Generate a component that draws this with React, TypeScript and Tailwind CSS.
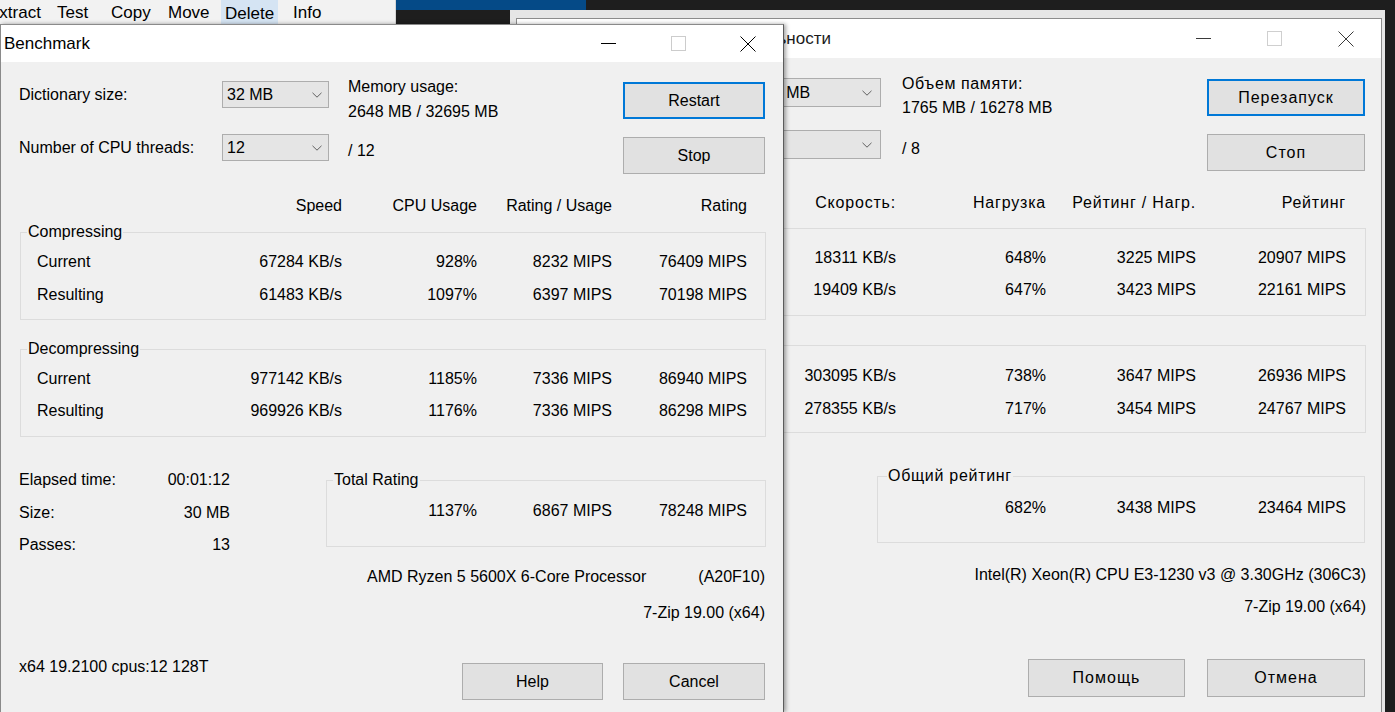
import React from "react";

const Chevron = () => (
  <svg width="10" height="6" viewBox="0 0 10 6" fill="none" aria-hidden>
    <path d="M0.5 0.8L5 5.2L9.5 0.8" stroke="#606060" strokeWidth="1" />
  </svg>
);

function Combo({ text, className }: { text: string; className: string }) {
  return (
    <div className={"flex items-center justify-between border border-[#adadad] bg-[#e5e5e5] " + className}>
      <span>{text}</span>
      <Chevron />
    </div>
  );
}

function Btn({ children, className }: { children: React.ReactNode; className: string }) {
  return <div className={"flex items-center justify-center bg-[#e1e1e1] " + className}>{children}</div>;
}

function Controls({ w, dark, light }: { w: string; dark: string; light: string }) {
  return (
    <div className="flex h-full">
      <div className={"flex h-full items-center justify-center " + w}>
        <svg width="15" height="1" aria-hidden>
          <rect width="15" height="1" fill={dark} />
        </svg>
      </div>
      <div className={"flex h-full items-center justify-center " + w}>
        <svg width="15" height="15" aria-hidden>
          <rect x="0.5" y="0.5" width="14" height="14" fill="none" stroke={light} />
        </svg>
      </div>
      <div className={"flex h-full items-center justify-center " + w}>
        <svg width="16" height="16" aria-hidden>
          <path d="M0.5 0.5L15.5 15.5M15.5 0.5L0.5 15.5" stroke={dark} strokeWidth="1" />
        </svg>
      </div>
    </div>
  );
}

const leftComp = [
  ["Current", "67284 KB/s", "928%", "8232 MIPS", "76409 MIPS"],
  ["Resulting", "61483 KB/s", "1097%", "6397 MIPS", "70198 MIPS"],
];
const leftDecomp = [
  ["Current", "977142 KB/s", "1185%", "7336 MIPS", "86940 MIPS"],
  ["Resulting", "969926 KB/s", "1176%", "7336 MIPS", "86298 MIPS"],
];
const rightComp = [
  ["18311 KB/s", "648%", "3225 MIPS", "20907 MIPS"],
  ["19409 KB/s", "647%", "3423 MIPS", "22161 MIPS"],
];
const rightDecomp = [
  ["303095 KB/s", "738%", "3647 MIPS", "26936 MIPS"],
  ["278355 KB/s", "717%", "3454 MIPS", "24767 MIPS"],
];

function RightWindow() {
  return (
    <div className="absolute left-[510px] top-[10px] z-0 h-[702px] w-[875px] bg-[#e6e6e6] pl-[6px] pr-[3px] pt-[8px]">
      <div className="flex h-full flex-col border-l border-r border-t border-[#8c8c8c] bg-[#f0f0f0]">
        {/* title bar */}
        <div className="flex h-[39px] items-center bg-white">
          <div className="w-[314px] text-right text-[17px] text-[#1a1a1a]">Тестирование производительности</div>
          <div className="flex-1" />
          <Controls w="w-[71px]" dark="#3a3a3a" light="#cfcfcf" />
        </div>
        {/* body */}
        <div className="flex flex-1 flex-col">
          <div className="flex h-[113px] pl-[18px]">
            <div className="flex flex-col gap-[23px] pt-[20px]">
              <div className="flex h-[29px] items-center">
                <span className="w-[224px]" />
                <Combo text="16 MB" className="h-[29px] w-[122px] pl-[4px] pr-[8px]" />
              </div>
              <div className="flex h-[29px] items-center">
                <span className="w-[224px]" />
                <Combo text="" className="h-[29px] w-[122px] pl-[4px] pr-[8px]" />
              </div>
            </div>
            <div className="ml-[21px] w-[305px] pt-[14px] leading-[24px]">
              <div className="tracking-[0.6px]">Объем памяти:</div>
              <div>1765 MB / 16278 MB</div>
              <div className="mt-[17px]">/ 8</div>
            </div>
            <div className="flex flex-col gap-[18px] pt-[21px]">
              <Btn className="h-[37px] w-[158px] border-2 border-[#0078d7] tracking-[1px]">Перезапуск</Btn>
              <Btn className="h-[37px] w-[158px] border border-[#adadad] tracking-[1px]">Стоп</Btn>
            </div>
          </div>

          <div className="ml-[19px] mt-[22px] grid grid-cols-[210px_150px_150px_150px_150px] tracking-[0.8px]">
            <span />
            <span className="text-right">Скорость:</span>
            <span className="text-right">Нагрузка</span>
            <span className="text-right">Рейтинг / Нагр.</span>
            <span className="text-right">Рейтинг</span>
          </div>

          <fieldset className="ml-[18px] mt-[5px] w-[831px] border border-[#dcdcdc] pb-[9px] pt-[4px]">
            <legend className="ml-[9px] px-[1px] leading-[20px]">Сжатие</legend>
            {rightComp.map((r, i) => (
              <div key={i} className="grid h-[32px] grid-cols-[210px_150px_150px_150px_150px] items-center">
                <span />
                <span className="text-right">{r[0]}</span>
                <span className="text-right">{r[1]}</span>
                <span className="text-right">{r[2]}</span>
                <span className="text-right">{r[3]}</span>
              </div>
            ))}
          </fieldset>

          <fieldset className="ml-[18px] mt-[19px] w-[831px] border border-[#dcdcdc] pb-[7px] pt-[4px]">
            <legend className="ml-[9px] px-[1px] leading-[20px]">Распаковка</legend>
            {rightDecomp.map((r, i) => (
              <div key={i} className="grid h-[33px] grid-cols-[210px_150px_150px_150px_150px] items-center">
                <span />
                <span className="text-right">{r[0]}</span>
                <span className="text-right">{r[1]}</span>
                <span className="text-right">{r[2]}</span>
                <span className="text-right">{r[3]}</span>
              </div>
            ))}
          </fieldset>

          <div className="mt-[33px] flex h-[77px] items-start pl-[18px]">
            <div className="w-[211px]" />
            <fieldset className="ml-[131px] w-[488px] border border-[#dcdcdc] pb-[18px] pt-[6px]">
              <legend className="ml-[9px] px-[1px] leading-[20px] tracking-[0.7px]">Общий рейтинг</legend>
              <div className="grid h-[32px] grid-cols-[18px_150px_150px_150px] items-center">
                <span />
                <span className="text-right">682%</span>
                <span className="text-right">3438 MIPS</span>
                <span className="text-right">23464 MIPS</span>
              </div>
            </fieldset>
          </div>

          <div className="ml-[18px] mt-[22px] w-[831px] text-right">Intel(R) Xeon(R) CPU E3-1230 v3 @ 3.30GHz (306C3)</div>
          <div className="ml-[18px] mt-[12px] w-[831px] text-right">7-Zip 19.00 (x64)</div>

          <div className="ml-[18px] mt-[42px] flex w-[830px] justify-end gap-[22px]">
            <Btn className="h-[38px] w-[157px] border border-[#adadad] tracking-[1px]">Помощь</Btn>
            <Btn className="h-[38px] w-[158px] border border-[#adadad] tracking-[1px]">Отмена</Btn>
          </div>
        </div>
      </div>
    </div>
  );
}

function LeftWindow() {
  return (
    <div className="absolute left-0 top-[24px] z-10 flex h-[688px] w-[784px] flex-col border-l border-r border-t border-[#8a8a8a] border-r-[#5c5c5c] shadow-[2px_0_4px_rgba(0,0,0,0.35)]">
      <div className="flex h-[37px] items-center bg-white">
        <span className="pl-[3px] text-[17px]">Benchmark</span>
        <div className="flex-1" />
        <Controls w="w-[70px]" dark="#000000" light="#cccccc" />
      </div>
      <div className="flex flex-1 flex-col bg-[#f0f0f0]">
        <div className="flex h-[113px] pl-[18px]">
          <div className="flex flex-col gap-[26px] pt-[19px]">
            <div className="flex h-[27px] items-center">
              <span className="w-[203px]">Dictionary size:</span>
              <Combo text="32 MB" className="h-[27px] w-[107px] pl-[4px] pr-[6px]" />
            </div>
            <div className="flex h-[27px] items-center">
              <span className="w-[203px]">Number of CPU threads:</span>
              <Combo text="12" className="h-[27px] w-[107px] pl-[4px] pr-[6px]" />
            </div>
          </div>
          <div className="ml-[19px] w-[275px] pt-[12px] leading-[25px]">
            <div>Memory usage:</div>
            <div>2648 MB / 32695 MB</div>
            <div className="mt-[14px]">/ 12</div>
          </div>
          <div className="flex flex-col gap-[18px] pt-[20px]">
            <Btn className="h-[37px] w-[142px] border-2 border-[#0078d7]">Restart</Btn>
            <Btn className="h-[37px] w-[142px] border border-[#adadad]">Stop</Btn>
          </div>
        </div>

        <div className="ml-[19px] mt-[21px] grid grid-cols-[187px_135px_135px_135px_135px]">
          <span />
          <span className="text-right">Speed</span>
          <span className="text-right">CPU Usage</span>
          <span className="text-right">Rating / Usage</span>
          <span className="text-right">Rating</span>
        </div>

        <fieldset className="ml-[19px] mt-[6px] w-[746px] border border-[#dcdcdc] pb-[8px] pt-[3px]">
          <legend className="ml-[6px] px-[1px] leading-[20px]">Compressing</legend>
          {leftComp.map((r, i) => (
            <div key={i} className="grid h-[33px] grid-cols-[186px_135px_135px_135px_135px] items-center">
              <span className="pl-[16px]">{r[0]}</span>
              <span className="text-right">{r[1]}</span>
              <span className="text-right">{r[2]}</span>
              <span className="text-right">{r[3]}</span>
              <span className="text-right">{r[4]}</span>
            </div>
          ))}
        </fieldset>

        <fieldset className="ml-[19px] mt-[19px] w-[746px] border border-[#dcdcdc] pb-[9px] pt-[4px]">
          <legend className="ml-[6px] px-[1px] leading-[20px]">Decompressing</legend>
          {leftDecomp.map((r, i) => (
            <div key={i} className="grid h-[32px] grid-cols-[186px_135px_135px_135px_135px] items-center">
              <span className="pl-[16px]">{r[0]}</span>
              <span className="text-right">{r[1]}</span>
              <span className="text-right">{r[2]}</span>
              <span className="text-right">{r[3]}</span>
              <span className="text-right">{r[4]}</span>
            </div>
          ))}
        </fieldset>

        <div className="mt-[26px] flex h-[96px] items-start pl-[18px]">
          <div className="flex w-[211px] flex-col pt-[1px]">
            <div className="flex h-[32.5px] items-center justify-between">
              <span>Elapsed time:</span>
              <span>00:01:12</span>
            </div>
            <div className="flex h-[32.5px] items-center justify-between">
              <span>Size:</span>
              <span>30 MB</span>
            </div>
            <div className="flex h-[32.5px] items-center justify-between">
              <span>Passes:</span>
              <span>13</span>
            </div>
          </div>
          <fieldset className="ml-[96px] mt-[7px] w-[440px] border border-[#dcdcdc] pb-[19px] pt-[5px]">
            <legend className="ml-[6px] px-[1px] leading-[20px]">Total Rating</legend>
            <div className="grid h-[32px] grid-cols-[15px_135px_135px_135px] items-center">
              <span />
              <span className="text-right">1137%</span>
              <span className="text-right">6867 MIPS</span>
              <span className="text-right">78248 MIPS</span>
            </div>
          </fieldset>
        </div>

        <div className="ml-[366px] mt-[8px] flex w-[398px] justify-between">
          <span>AMD Ryzen 5 5600X 6-Core Processor</span>
          <span>(A20F10)</span>
        </div>
        <div className="ml-[18px] mt-[16px] w-[746px] text-right">7-Zip 19.00 (x64)</div>

        <div className="ml-[18px] mt-[34px] flex w-[746px] items-start justify-between">
          <span>x64 19.2100 cpus:12 128T</span>
          <div className="mt-[6px] flex gap-[20px]">
            <Btn className="h-[37px] w-[141px] border border-[#adadad]">Help</Btn>
            <Btn className="h-[37px] w-[142px] border border-[#adadad]">Cancel</Btn>
          </div>
        </div>
      </div>
    </div>
  );
}

export default function App() {
  return (
    <div className="relative h-[712px] w-[1395px] overflow-hidden bg-[#1e1e1e] font-['Liberation_Sans',Arial,sans-serif] text-[16px] leading-[20px] text-black">
      {/* background file manager menu bar */}
      <div className="absolute left-0 top-0 h-[24px] w-[396px] overflow-hidden border-r border-[#d6d6d6] bg-[#f2f2f2]">
        <div className="-ml-[12px] flex h-[24px] items-center text-[17px] leading-[24px]">
          <span className="w-[69px] shrink-0 pt-[2px]">Extract</span>
          <span className="w-[54px] shrink-0 pt-[2px]">Test</span>
          <span className="w-[57px] shrink-0 pt-[2px]">Copy</span>
          <span className="w-[53px] shrink-0 pt-[2px]">Move</span>
          <span className="w-[72px] shrink-0">
            <span className="block h-[24px] w-[57px] bg-[#d5e4f3] pl-[4px] pt-[2px]">Delete</span>
          </span>
          <span className="shrink-0 pt-[2px]">Info</span>
        </div>
      </div>
      {/* blue strip of another window */}
      <div className="absolute left-[396px] top-0 h-[10px] w-[190px] bg-[#054a87]" />

      <RightWindow />
      <LeftWindow />
    </div>
  );
}
